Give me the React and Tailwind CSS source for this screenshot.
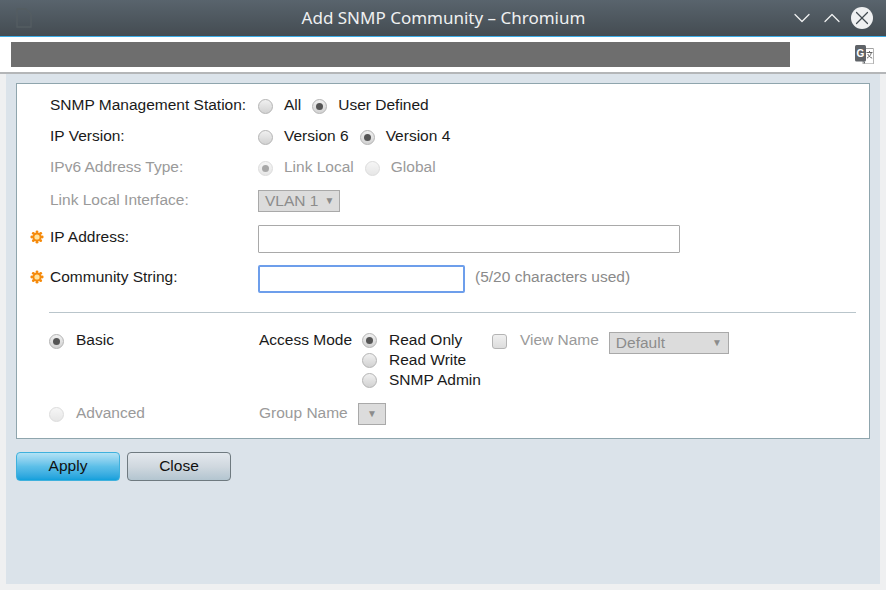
import { ChevronDown, ChevronUp, X } from 'lucide-react'

function Radio({ checked, disabled }) {
  return (
    <span className={`flex h-[15px] w-[15px] shrink-0 items-center justify-center rounded-full border ${disabled ? 'border-[#dcdcdc] bg-gradient-to-b from-[#f6f6f6] to-[#e6e6e6]' : 'border-[#b4b4b4] bg-gradient-to-b from-[#f0f0f0] to-[#d2d2d2]'}`}>
      {checked && <span className={`h-[7px] w-[7px] rounded-full ${disabled ? 'bg-[#a8a8a8]' : 'bg-[#555]'}`} />}
    </span>
  )
}

function Option({ label, checked, disabled, gap = 'gap-[12px]', className = '' }) {
  return (
    <span className={`flex items-center ${gap} ${className}`}>
      <Radio checked={checked} disabled={disabled} />
      <span className={`-mt-0.5 ${disabled ? 'text-[#9a9a9a]' : 'text-[#1a1a1a]'}`}>{label}</span>
    </span>
  )
}

function Star() {
  return (
    <svg width="14" height="14" viewBox="0 0 14 14" className="shrink-0">
      <g fill="#f58a0b">
        <circle cx="7" cy="7" r="4.6" />
        <circle cx="7" cy="1.8" r="1.4" />
        <circle cx="7" cy="12.2" r="1.4" />
        <circle cx="1.8" cy="7" r="1.4" />
        <circle cx="12.2" cy="7" r="1.4" />
        <circle cx="3.3" cy="3.3" r="1.4" />
        <circle cx="10.7" cy="3.3" r="1.4" />
        <circle cx="3.3" cy="10.7" r="1.4" />
        <circle cx="10.7" cy="10.7" r="1.4" />
      </g>
      <circle cx="7" cy="7" r="2.6" fill="#ffe3a0" />
    </svg>
  )
}

function Row({ label, disabled, required, className = '', children }) {
  return (
    <div className={`flex items-center ${className}`}>
      <div className={`flex w-[241px] shrink-0 items-center pl-[13px] ${required ? '-mt-[2px]' : ''} ${disabled ? 'text-[#9a9a9a]' : 'text-[#1a1a1a]'}`}>
        <span className="-mt-[3px] flex w-5 shrink-0">{required && <Star />}</span>
        <span className="-mt-0.5">{label}</span>
      </div>
      {children}
    </div>
  )
}

export default function App() {
  return (
    <div className="flex h-[590px] w-[886px] flex-col overflow-hidden bg-[#eff0f1] text-[15.5px] leading-[18px] [font-family:'Liberation_Sans',Arial,sans-serif]">
      {/* window title bar */}
      <div className="flex h-[37px] shrink-0 items-center border-b border-[#3daee9] bg-gradient-to-b from-[#59646d] to-[#444c52] pl-4 pr-[13px]">
        <svg width="16" height="20" viewBox="0 0 16 20" fill="none" stroke="#545d62" strokeWidth="1.4">
          <path d="M1 1h9l5 5v13H1z" />
        </svg>
        <div className="flex-1 pl-[64px] text-center text-[17px] text-[#eff0f1] [font-family:'Noto_Sans',sans-serif]">Add SNMP Community – Chromium</div>
        <ChevronDown size={28} strokeWidth={1.1} className="-mx-[3px] text-[#eff0f1]" />
        <ChevronUp size={28} strokeWidth={1.1} className="-mr-[3px] ml-[5px] text-[#eff0f1]" />
        <span className="ml-[8px] flex h-[22px] w-[22px] items-center justify-center rounded-full bg-[#eff0f1]">
          <X size={22} strokeWidth={1.3} className="text-[#444c52]" />
        </span>
      </div>

      {/* address bar */}
      <div className="flex h-[37px] shrink-0 items-center border-b-2 border-[#b4b6b8] bg-white pl-[11px] pr-[12px]">
        <div className="h-[25px] w-[779px] bg-[#6e6e6e]" />
        <svg width="19" height="19" viewBox="0 0 19 19" className="ml-auto">
          <path d="M8 3.5h10a.7.7 0 0 1 .7.7v14a.7.7 0 0 1-.7.7H8z" fill="#fff" stroke="#8a8a8a" strokeWidth="0.8" />
          <rect x="0" y="0" width="11" height="16.5" rx="1.5" fill="#5f6368" />
          <path d="M8 16.5l2 2.4V16.5z" fill="#5f6368" />
          <text x="1.5" y="11.5" fontSize="10" fontWeight="700" fill="#fff" fontFamily="Liberation Sans">G</text>
          <path d="M11.5 7.5h6M14.5 6v1.5M16.4 7.5c-.6 2.6-2.2 4.5-4.4 5.6M12.8 9c.7 1.8 2.2 3.3 4.4 4.2" fill="none" stroke="#666" strokeWidth="1" />
        </svg>
      </div>

      {/* dialog body */}
      <div className="mx-[6px] flex flex-1 flex-col bg-[#dbe3ea] px-[10px] pt-[9px]">
        <div className="h-[356px] shrink-0 border border-[#8fa5ad] bg-white pr-[13px] pt-[13px]">
          <Row label="SNMP Management Station:" className="h-[18px]">
            <Option label="All" gap="gap-[11px]" />
            <Option label="User Defined" checked gap="gap-[11px]" className="ml-[11px]" />
          </Row>
          <Row label="IP Version:" className="mt-[13px] h-[18px]">
            <Option label="Version 6" gap="gap-[11px]" />
            <Option label="Version 4" checked gap="gap-[11px]" className="ml-[11px]" />
          </Row>
          <Row label="IPv6 Address Type:" disabled className="mt-[13px] h-[18px]">
            <Option label="Link Local" checked disabled gap="gap-[11px]" />
            <Option label="Global" disabled gap="gap-[11px]" className="ml-[11px]" />
          </Row>
          <Row label="Link Local Interface:" disabled className="mt-[13px] h-[22px]">
            <div className="flex h-[22px] w-[82px] items-center border border-[#a9a9a9] bg-[#dcdcdc] pl-[6px] text-[#8c8c8c]">
              VLAN 1
              <span className="ml-[6px] text-[10px] text-[#8c8c8c]">▼</span>
            </div>
          </Row>
          <Row label="IP Address:" required className="mt-[13px] h-[28px]">
            <div className="h-[28px] w-[422px] rounded-[1px] border border-[#a9a9a9] bg-white" />
          </Row>
          <Row label="Community String:" required className="mt-[12px] h-[28px]">
            <div className="h-[28px] w-[207px] rounded-[2px] border-2 border-[#6d9eeb] bg-white" />
            <span className="-mt-1 ml-[10px] text-[#8a8a8a]">(5/20 characters used)</span>
          </Row>

          <div className="ml-[32px] mt-[19px] border-t border-[#b9c5cb]" />

          <div className="mt-[19px] flex">
            <Option label="Basic" checked className="ml-[32px] h-[18px] w-[209px]" />
            <span className="-mt-px w-[104px] pl-px text-[#1a1a1a]">Access Mode</span>
            <div className="mt-px flex flex-col gap-[5px]">
              <Option label="Read Only" checked className="h-[15px]" />
              <Option label="Read Write" className="h-[15px]" />
              <Option label="SNMP Admin" className="h-[15px]" />
            </div>
            <span className="ml-[11px] flex h-[18px] items-center">
              <span className="h-[15px] w-[15px] rounded-[3px] border border-[#b4b4b4] bg-gradient-to-b from-[#f0f0f0] to-[#dcdcdc]" />
              <span className="-mt-0.5 ml-[13px] text-[#9a9a9a]">View Name</span>
            </span>
            <div className="ml-[10px] flex h-[22px] w-[120px] items-center justify-between border border-[#a9a9a9] bg-[#dcdcdc] px-[6px] text-[#8c8c8c]">
              Default
              <span className="text-[10px] text-[#8c8c8c]">▼</span>
            </div>
          </div>

          <div className="mt-[15px] flex items-center">
            <Option label="Advanced" disabled className="ml-[32px] w-[209px]" />
            <span className="-mt-0.5 w-[100px] pl-px text-[#9a9a9a]">Group Name</span>
            <div className="flex h-[22px] w-[28px] items-center justify-center border border-[#a9a9a9] bg-[#dcdcdc] text-[10px] text-[#8c8c8c]">▼</div>
          </div>
        </div>

        <div className="mt-[13px] flex gap-[7px]">
          <button className="h-[29px] w-[104px] rounded-[4px] border border-[#3fb1dd] bg-gradient-to-b from-[#b3e2f5] via-[#5cbfe8] via-50% to-[#10a0dc] pb-px text-[15.5px] text-[#111]">Apply</button>
          <button className="h-[29px] w-[104px] rounded-[4px] border border-[#6f7a80] bg-gradient-to-b from-[#e3e8ed] via-[#d0d8df] via-50% to-[#b3c5d0] pb-px text-[15.5px] text-[#111]">Close</button>
        </div>
      </div>
      <div className="h-[6px] shrink-0" />
    </div>
  )
}
